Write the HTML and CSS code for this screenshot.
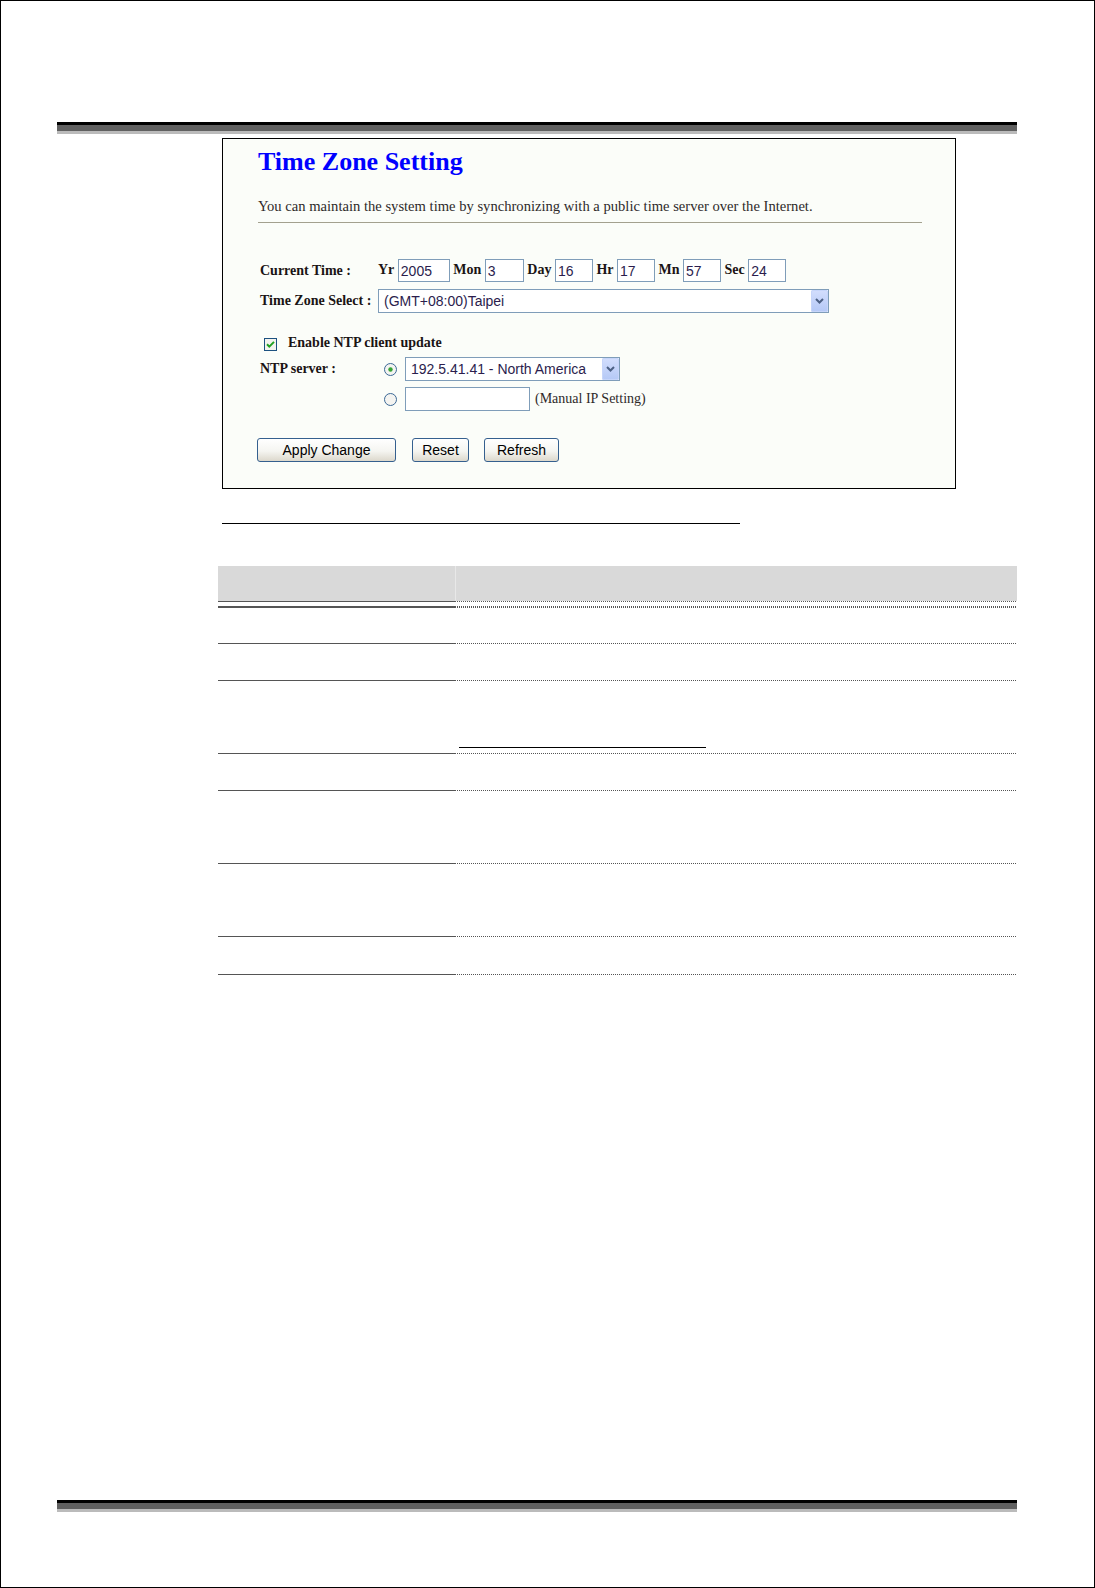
FILE: index.html
```html
<!DOCTYPE html>
<html lang="en">
<head>
    <meta charset="UTF-8">
    <meta name="viewport" content="width=device-width, initial-scale=1.0">
    <title>Time Zone Setting</title>
    <link rel="stylesheet" href="styles.css">
</head>
<body>

    <div class="page">
        <div class="sheet">
            <div class="band"></div>

            <!-- Capture de la page de configuration -->
            <div class="tz-box">
                <h2 class="tz-title">Time Zone Setting</h2>
                <p class="tz-desc">You can maintain the system time by synchronizing with a public time server over the Internet.</p>
                <hr class="tz-rule">

                <form class="tz-form">
                    <div class="tz-row row-time">
                        <span class="tz-label">Current Time :</span>
                        <span class="tz-fields">
                            <b>Yr</b> <input class="num yr" value="2005"> <b>Mon</b> <input class="num mon" value="3"> <b>Day</b> <input class="num" value="16"> <b>Hr</b> <input class="num" value="17"> <b>Mn</b> <input class="num" value="57"> <b>Sec</b> <input class="num" value="24">
                        </span>
                    </div>

                    <div class="tz-row row-zone">
                        <span class="tz-label">Time Zone Select :</span>
                        <span class="select zone">
                            <select><option>(GMT+08:00)Taipei</option></select>
                            <span class="arrow"><svg width="17" height="22" viewBox="0 0 17 22"><path d="M5 9 L8.5 12.5 L12 9" fill="none" stroke="#4d6185" stroke-width="2"/></svg></span>
                        </span>
                    </div>

                    <div class="tz-row row-check">
                        <span class="check"><svg width="13" height="13" viewBox="0 0 13 13"><rect x="0.5" y="0.5" width="12" height="12" fill="#f3f3ef" stroke="#1c5180"/><path d="M3 6.3 L5.3 8.6 L10 3.9" fill="none" stroke="#21a121" stroke-width="2"/></svg></span>
                        <span class="check-text">Enable NTP client update</span>
                    </div>

                    <div class="tz-row row-ntp">
                        <span class="tz-label">NTP server :</span>
                        <span class="radio"><svg width="13" height="13" viewBox="0 0 13 13"><circle cx="6.5" cy="6.5" r="6" fill="#f4f4f1" stroke="#3b6895"/><circle cx="6.5" cy="6.5" r="2.2" fill="#36a436"/></svg></span>
                        <span class="select ntp">
                            <select><option>192.5.41.41 - North America</option></select>
                            <span class="arrow"><svg width="17" height="22" viewBox="0 0 17 22"><path d="M5 9 L8.5 12.5 L12 9" fill="none" stroke="#4d6185" stroke-width="2"/></svg></span>
                        </span>
                    </div>

                    <div class="tz-row row-manual">
                        <span class="tz-label"></span>
                        <span class="radio"><svg width="13" height="13" viewBox="0 0 13 13"><circle cx="6.5" cy="6.5" r="6" fill="#f4f4f1" stroke="#3b6895"/></svg></span>
                        <input class="ip" value="">
                        <span class="hint">(Manual IP Setting)</span>
                    </div>

                    <div class="tz-buttons">
                        <button type="button" class="xp-btn apply">Apply Change</button>
                        <button type="button" class="xp-btn reset">Reset</button>
                        <button type="button" class="xp-btn refresh">Refresh</button>
                    </div>
                </form>
            </div>

            <div class="caption-rule"></div>

            <!-- Tableau des paramètres -->
            <div class="spec">
                <div class="spec-row spec-head"><div class="cell"></div><div class="cell"></div></div>
                <div class="spec-row spec-gap"><div class="cell"></div><div class="cell"></div></div>
                <div class="spec-row line h35"><div class="cell"></div><div class="cell"></div></div>
                <div class="spec-row line h36"><div class="cell"></div><div class="cell"></div></div>
                <div class="spec-row line h72"><div class="cell"></div><div class="cell"><span class="link-line"></span></div></div>
                <div class="spec-row line h36"><div class="cell"></div><div class="cell"></div></div>
                <div class="spec-row line h72"><div class="cell"></div><div class="cell"></div></div>
                <div class="spec-row line h72"><div class="cell"></div><div class="cell"></div></div>
                <div class="spec-row line h37"><div class="cell"></div><div class="cell"></div></div>
            </div>
        </div>

        <div class="foot">
            <div class="band"></div>
        </div>
    </div>

</body>
</html>
```

FILE: styles.css
```css
body {
    margin: 0;
    background-color: #fff;
    font-family: "Liberation Serif", "Times New Roman", serif;
}
.page {
    width: 1095px;
    height: 1588px;
    box-sizing: border-box;
    border: 1px solid #000;
    display: flex;
    flex-direction: column;
    padding-bottom: 75px;
}
.sheet {
    padding: 121px 0 0 56px;
}
.foot {
    margin-top: auto;
    padding-left: 56px;
}
.band {
    width: 960px;
    height: 6px;
    background-color: #606060;
    border-top: 3px solid #000;
    border-bottom: 3px solid #bbb;
}

/* boite de configuration */
.tz-box {
    margin: 4px 0 0 165px;
    width: 734px;
    height: 351px;
    box-sizing: border-box;
    border: 1px solid #000;
    background-color: #fbfdf9;
    padding: 8px 0 0 35px;
}
.tz-title {
    margin: 0;
    font-size: 26px;
    line-height: 30px;
    font-weight: bold;
    color: #0000ff;
}
.tz-desc {
    margin: 20px 0 0;
    font-size: 14.6px;
    line-height: 18px;
    color: #2e2a2a;
}
.tz-rule {
    margin: 7px 0 0;
    width: 664px;
    height: 0;
    border: 0;
    border-top: 1px solid #a3a18f;
}
.tz-form {
    margin-top: 36px;
}
.tz-row {
    display: flex;
    align-items: center;
    font-size: 14px;
    line-height: 18px;
    color: #1a1414;
}
.tz-label {
    width: 120px;
    padding-left: 2px;
    box-sizing: border-box;
    font-weight: bold;
    flex-shrink: 0;
}
.row-time {
    height: 23px;
}
.tz-fields {
    white-space: nowrap;
}
input.num, input.ip {
    box-sizing: border-box;
    height: 23px;
    width: 38px;
    border: 1px solid #7f9db9;
    background: #fff;
    padding: 0 0 0 2px;
    margin: 0;
    font: 14px "Liberation Sans", Arial, sans-serif;
    color: #2b1d4d;
    vertical-align: middle;
}
input.yr { width: 52px; }
input.mon { width: 39px; }
.row-zone {
    margin-top: 7px;
    height: 24px;
}
.select {
    position: relative;
    display: inline-block;
    height: 24px;
}
.select select {
    appearance: none;
    -webkit-appearance: none;
    box-sizing: border-box;
    width: 100%;
    height: 24px;
    margin: 0;
    border: 1px solid #7f9db9;
    border-radius: 0;
    background: #fff;
    padding: 0 0 0 5px;
    font: 14px "Liberation Sans", Arial, sans-serif;
    color: #2b1d4d;
}
.select .arrow {
    position: absolute;
    top: 1px;
    right: 1px;
    bottom: 1px;
    width: 17px;
    border-radius: 2px;
    background: linear-gradient(#d3defd, #b4c8f6);
    box-shadow: inset 0 0 0 1px #c6d5fa;
}
.select .arrow svg {
    display: block;
}
.zone { width: 451px; }
.ntp { width: 215px; margin-left: 8px; }
.row-check {
    margin-top: 24px;
    height: 15px;
    padding-left: 6px;
}
.check, .radio {
    display: block;
    width: 13px;
    height: 13px;
}
.check svg, .radio svg {
    display: block;
}
.check {
    margin-right: 11px;
}
.check-text {
    font-weight: bold;
    margin-bottom: 3px;
}
.row-ntp {
    margin-top: 5px;
    height: 24px;
}
.radio {
    margin-left: 6px;
}
.row-manual {
    margin-top: 6px;
    height: 24px;
}
input.ip {
    width: 125px;
    height: 24px;
    margin-left: 8px;
}
.hint {
    margin-left: 5px;
    color: #2e2a2a;
}
.tz-buttons {
    display: flex;
    margin: 27px 0 0 -1px;
}
.xp-btn {
    box-sizing: border-box;
    height: 24px;
    margin: 0;
    padding: 0;
    border: 1px solid #35608f;
    border-radius: 3px;
    background: linear-gradient(#ffffff 0%, #f5f5f1 55%, #dcd8cc 100%);
    font: 14px "Liberation Sans", Arial, sans-serif;
    color: #000;
}
.apply { width: 139px; margin-right: 16px; }
.reset { width: 57px; margin-right: 15px; }
.refresh { width: 75px; }

/* tableau */
.caption-rule {
    margin: 34px 0 0 165px;
    width: 518px;
    border-top: 1px solid #000;
}
.spec {
    margin: 42px 0 0 161px;
    width: 799px;
}
.spec-row {
    display: grid;
    grid-template-columns: 237px 562px;
}
.spec-head .cell {
    height: 35px;
    background-color: #d9d9d9;
}
.spec-head .cell + .cell {
    border-left: 1px solid #e8e8e8;
}
.spec-gap .cell {
    height: 4px;
    border-top: 1px solid #555;
    border-bottom: 2px solid #555;
}
.spec-gap .cell + .cell {
    border: 0;
    padding: 1px 0 2px;
    background:
        repeating-linear-gradient(90deg, #555 0 1px, transparent 1px 2px) left top / 100% 1px no-repeat,
        repeating-linear-gradient(90deg, #555 0 1px, transparent 1px 2px) left bottom / 100% 2px no-repeat;
}
.line .cell {
    border-bottom: 1px solid #555;
}
.line .cell + .cell {
    border-bottom: 0;
    padding-bottom: 1px;
    background: repeating-linear-gradient(90deg, #555 0 1px, transparent 1px 2px) left bottom / 100% 1px no-repeat;
}
.h35 .cell { height: 35px; }
.h36 .cell { height: 36px; }
.h37 .cell { height: 37px; }
.h72 .cell { height: 72px; }
.link-line {
    display: block;
    width: 247px;
    margin: 66px 0 0 4px;
    border-top: 1px solid #000;
}
```
